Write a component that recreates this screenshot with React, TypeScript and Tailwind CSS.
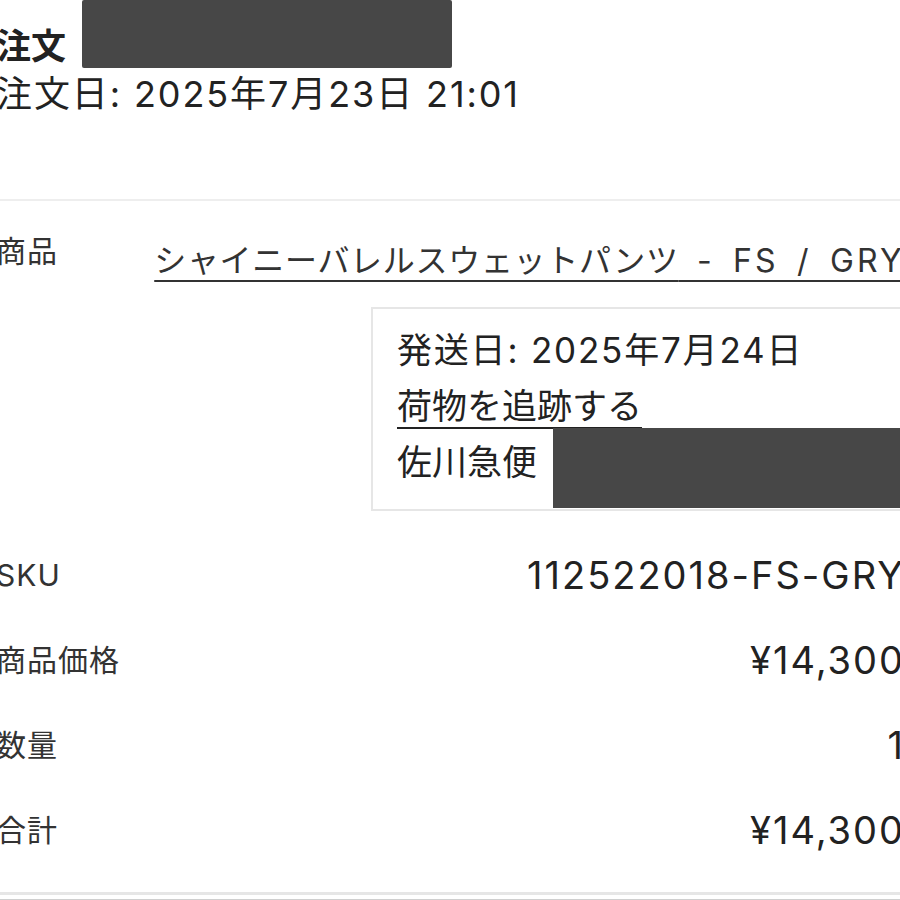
import React from 'react';

const font = { fontFamily: '"Inter", "Noto Sans CJK JP", sans-serif' };

const rows = [
  { label: 'SKU', value: '112522018-FS-GRY' },
  { label: '商品価格', value: '¥14,300' },
  { label: '数量', value: '1' },
  { label: '合計', value: '¥14,300' },
];

const App: React.FC = () => {
  return (
    <div className="w-[900px] h-[900px] overflow-hidden bg-white text-[#222]" style={font}>
      <div className="ml-[-4px] w-[909px]">
        {/* ヘッダー */}
        <div className="flex items-end h-[68px]">
          <h1 className="text-[35px] font-bold leading-none pb-[4px] w-[86px]">注文</h1>
          <div className="h-[68px] w-[370px] bg-[#474747] rounded-[2px]" />
        </div>
        <p className="text-[36px] leading-[48px] mt-[2px] tracking-[1.9px]">注文日: 2025年7月23日 21:01</p>

        {/* 注文明細 */}
        <div className="mt-[81px] border-t-2 border-[#eeeeee]">
          <div className="flex justify-between pt-[38px]">
            <span className="text-[30px] text-[#333] leading-[40px] tracking-[1px] mt-[-8px]">商品</span>
            <div className="flex flex-col items-end">
              <a className="text-[32px] text-[#333] leading-[44px] tracking-[0.7px] underline decoration-2 underline-offset-[8px] whitespace-nowrap">
                シャイニーバレルスウェットパンツ
                <span className="tracking-[3.2px] [word-spacing:6px]"> - FS / GRY</span>
              </a>
              <div className="mt-[24px] w-[534px] border-2 border-[#e6e6e6] pl-[24px] pt-[13px] pb-[19px] text-[35px] leading-[56px] text-[#222]">
                <p className="tracking-[1.8px]">発送日: 2025年7月24日</p>
                <p>
                  <a className="underline decoration-2 underline-offset-[8px]">荷物を追跡する</a>
                </p>
                <p className="relative">
                  佐川急便
                  <span className="absolute left-[156px] top-[-6px] h-[80px] w-[400px] bg-[#474747]" />
                </p>
              </div>
            </div>
          </div>

          <div className="mt-[22px]">
            {rows.map((row) => (
              <div key={row.label} className="flex justify-between items-center h-[85px]">
                <span className="text-[30px] text-[#333] tracking-[1px]">{row.label}</span>
                <span className="text-[38px] text-[#222] tracking-[2px]">{row.value}</span>
              </div>
            ))}
          </div>
        </div>

        <div className="mt-[19px] h-[3px] bg-[#e6e6e6]" />
        <div className="mt-[4px] h-[2px] bg-[#cfcfcf]" />
      </div>
    </div>
  );
};

export default App;
